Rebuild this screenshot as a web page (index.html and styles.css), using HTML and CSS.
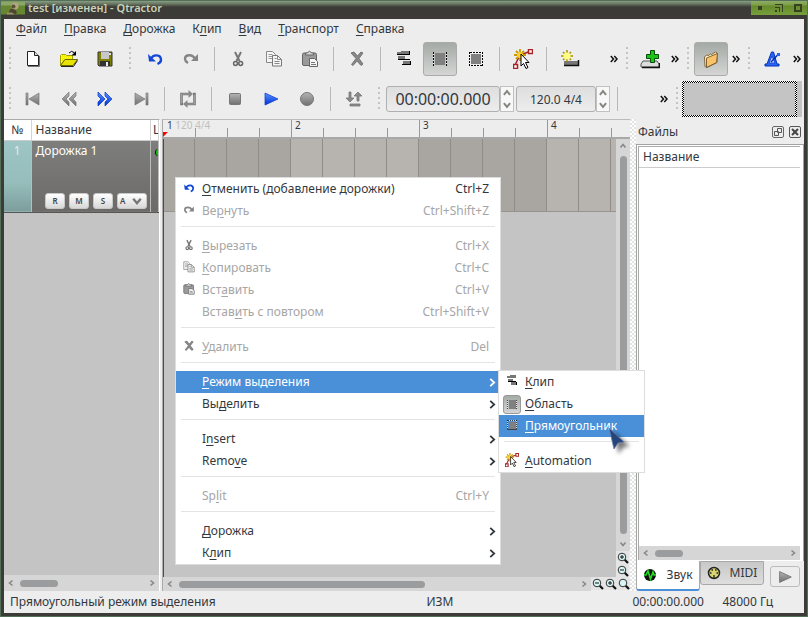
FILE: index.html
```html
<!DOCTYPE html>
<html lang="ru">
<head>
<meta charset="utf-8">
<title>test [изменен] - Qtractor</title>
<link rel="stylesheet" href="styles.css">
</head>
<body>
<svg class="defs" aria-hidden="true">
<defs>
<linearGradient id="g-gray" x1="0" y1="0" x2="0" y2="1"><stop offset="0" stop-color="#b4b4b4"/><stop offset="1" stop-color="#707070"/></linearGradient>
<linearGradient id="g-blue" x1="0" y1="0" x2="0" y2="1"><stop offset="0" stop-color="#5c94ff"/><stop offset="1" stop-color="#0030d8"/></linearGradient>
<pattern id="p-yellow" width="2" height="2" patternUnits="userSpaceOnUse"><rect width="2" height="2" fill="#f4f000"/><rect width="1" height="1" fill="#fffcc0"/></pattern>
</defs>
<symbol id="i-new" viewBox="0 0 20 20"><path d="M5 17.500h11.500V7" fill="none" stroke="#777"/><path d="M4.500 2.500h7l4 4v10h-11z" fill="#fff" stroke="#222"/><path d="M11.500 2.500v4h4" fill="#ddd" stroke="#222"/></symbol>
<symbol id="i-open" viewBox="0 0 20 20"><path d="M1.500 16.500v-10l1-1h4l1 1h6v4H6z" fill="url(#p-yellow)" stroke="#a0a000"/><path d="M1.500 16.500l4.500-6h12.500l-4.500 6z" fill="#e8e400" stroke="#6c6c00"/><path d="M2 17.500h12.500l4-6" fill="none" stroke="#222"/><path d="M10 4q2.500-3 5-.5l1 1.500" fill="none" stroke="#000"/><path d="M17 2v4.500h-4.500z"/></symbol>
<symbol id="i-save" viewBox="0 0 20 20"><path d="M3 3h14v14H4l-1-1z" fill="#808000" stroke="#333"/><path d="M6 3h8v7H6z" fill="#c8c8c8"/><path d="M5 12h10v5H5z" fill="#333"/><path d="M11 13h2v4h-2z" fill="#eee"/><path d="M14 4h2v2h-2z" fill="#ddd"/></symbol>
<symbol id="i-undo" viewBox="0 0 20 20"><path d="M6 10c2-5 10-5 10 1q0 2.500-3.500 4" fill="none" stroke="currentColor" stroke-width="2.400"/><path d="M3 5l1 7.500h7z" fill="currentColor"/></symbol>
<symbol id="i-redo" viewBox="0 0 20 20"><path d="M14 10c-2-5-10-5-10 0q0 2 3 4" fill="none" stroke="currentColor" stroke-width="2.400"/><path d="M17 5v7h-7z" fill="currentColor"/></symbol>
<symbol id="i-cut" viewBox="0 0 20 20"><path d="M7 3l4.500 9M13 3l-4.500 9" fill="none" stroke="#777" stroke-width="2"/><circle cx="7.500" cy="14.500" r="1.900" fill="none" stroke="#666" stroke-width="1.500"/><circle cx="12.700" cy="14.500" r="1.900" fill="none" stroke="#666" stroke-width="1.500"/></symbol>
<symbol id="i-copy" viewBox="0 0 20 20"><path d="M2.500 2.500h6l3 3v8h-9z" fill="#f5f5f5" stroke="#888"/><path d="M4.500 5.500h4M4.500 7.500h4M4.500 9.500h4" stroke="#999"/><path d="M8.500 6.500h5l4 4v6.500h-9z" fill="#f5f5f5" stroke="#777"/><path d="M13.500 6.500v4h4M10.500 9.500h2M10.500 12.500h5M10.500 14.500h5" fill="none" stroke="#888"/></symbol>
<symbol id="i-paste" viewBox="0 0 20 20"><rect x="2.500" y="4" width="14" height="12.500" rx="1.500" fill="#9a9a9a" stroke="#666"/><path d="M5.500 6V4h2q2-3.500 4 0h2v2z" fill="#d8d8d8" stroke="#666"/><path d="M9.500 9.500h5l3 3v5h-8z" fill="#f5f5f5" stroke="#666"/><path d="M11 13.500h4M11 15.500h5" stroke="#777"/></symbol>
<symbol id="i-delete" viewBox="0 0 20 20"><path d="M4 4l3-1 3.500 4L14 3l2 1-4 5.500 4 5.500-2 1.500-4-4.500-4 4.500-1.500-1L9 9.500z" fill="#888" stroke="#666" stroke-width=".8"/></symbol>
<symbol id="i-clip" viewBox="0 0 20 20"><g shape-rendering="crispEdges"><path d="M7 2h9v3H7zM4 7h7v3H4zM9 12h7v3H9z" fill="#777"/><path d="M3 3h4v2H3z" fill="#777"/><path d="M3 5h13v1H3zM15 2h1v4h-1zM4 10h12v1H4zM8 15h9v1H8zM16 12h1v4h-1z" fill="#000"/></g></symbol>
<symbol id="i-range" viewBox="0 0 20 20"><g shape-rendering="crispEdges"><path d="M5 4h10v12H5z" fill="#808080"/><path d="M3.500 3v14M16.500 3v14" stroke="#fff"/><path d="M3.500 3v14M16.500 3v14" stroke="#000" stroke-dasharray="2 1"/></g></symbol>
<symbol id="i-rect" viewBox="0 0 20 20"><g shape-rendering="crispEdges"><path d="M5 5h10v10H5z" fill="#808080"/><path d="M3.500 3.500h13v13h-13z" fill="none" stroke="#fff"/><path d="M3.500 3.500h13v13h-13z" fill="none" stroke="#000" stroke-dasharray="2 1"/></g></symbol>
<symbol id="i-auto" viewBox="0 0 20 20"><path d="M2 16L7 6l11-4" fill="none" stroke="#a22" stroke-width="1.500"/><path d="M7 0v12M1 6h12M3 2l8 8M11 2l-8 8" stroke="#c99a00" stroke-width="1.800"/><circle cx="7" cy="6" r="3" fill="#ffd030"/><path d="M.5 15.500h4v4h-4zM15.500.5h4v4h-4z" fill="#fff" stroke="#a22" stroke-width="1.500"/><path d="M8 5l8 8.500h-3.500l2.500 5-2 1-2.500-5-2.500 2.500z" fill="#fff" stroke="#000"/></symbol>
<symbol id="i-addclip" viewBox="0 0 20 20"><path d="M4 12h14v4H4z" fill="#777"/><path d="M4 16.500h14.500V11" fill="none" stroke="#111" stroke-width="1.500"/><path d="M7 1v12M1 7h12M3 3l8 8M11 3l-8 8" stroke="#a89000" stroke-width="1.500"/><circle cx="7" cy="7" r="3.600" fill="#ffff80"/></symbol>
<symbol id="i-addtrack" viewBox="0 0 20 20"><path d="M3 12h14l2 3v3H1v-3z" fill="#ddd" stroke="#555"/><path d="M2 18.500h17.500V14" stroke="#111" stroke-width="1.500" fill="none"/><path d="M10.500 1.500h4v4h4v4h-4v4h-4v-4h-4v-4h4z" fill="#19c519" stroke="#064d06"/></symbol>
<symbol id="i-folder" viewBox="0 0 20 20"><path d="M3.500 8l2-2 2 .5 2-1.500 1 .5 4-2.500 1.500 1v9.500l-10 5-2-1z" fill="#fff0c8" stroke="#7d6238"/><path d="M5.500 9l11-4.500-1 9-10 5z" fill="#fbc368" stroke="#7d6238"/></symbol>
<symbol id="i-metro" viewBox="0 0 20 20"><path d="M9.500 3h2l3.500 12h2v2H3v-2h2z" fill="#2a66f4" stroke="#0030b8"/><path d="M10 7l-3 7h6z" fill="#d8e4ff" stroke="#1a4ad8"/><path d="M9 13l7.500-8" stroke="#0030b8" stroke-width="1.500"/><path d="M15 4h3v3h-3z" fill="#2a66f4"/></symbol>
<symbol id="i-start" viewBox="0 0 20 20"><path d="M3 4h2v12H3zM16 4v12L6 10z" fill="url(#g-gray)" stroke="#777" stroke-width=".7"/></symbol>
<symbol id="i-rew" viewBox="0 0 20 20"><path d="M10 3v4l-3 3 3 3v4l-7-7zM17 3v4l-3 3 3 3v4l-7-7z" fill="url(#g-gray)" stroke="#777" stroke-width=".7"/></symbol>
<symbol id="i-fwd" viewBox="0 0 20 20"><path d="M3 3v4l3 3-3 3v4l7-7zM10 3v4l3 3-3 3v4l7-7z" fill="url(#g-blue)" stroke="#0038c8" stroke-width=".7"/></symbol>
<symbol id="i-end" viewBox="0 0 20 20"><path d="M15 4h2v12h-2zM4 4v12l10-6z" fill="url(#g-gray)" stroke="#777" stroke-width=".7"/></symbol>
<symbol id="i-loop" viewBox="0 0 20 20"><path d="M11 5H3.500v10H5M15 5h1.500v10H9" fill="none" stroke="#777" stroke-width="2.600"/><path d="M11 5H3.500v9.500M16.500 5.500V15H9" fill="none" stroke="#aaa" stroke-width=".8"/><path d="M10.500 1l4.500 4-4.500 4zM9.500 11v8L5 15z" fill="#8a8a8a"/></symbol>
<symbol id="i-stop" viewBox="0 0 20 20"><rect x="4.500" y="4.500" width="11" height="11" rx="1" fill="url(#g-gray)" stroke="#777"/></symbol>
<symbol id="i-play" viewBox="0 0 20 20"><path d="M4 4v12l13-6z" fill="url(#g-blue)" stroke="#0038c8" stroke-width=".7"/></symbol>
<symbol id="i-rec" viewBox="0 0 20 20"><circle cx="10" cy="10" r="6.500" fill="url(#g-gray)" stroke="#777"/></symbol>
<symbol id="i-punch" viewBox="0 0 20 20"><path d="M5 3h2v6h3l-4 4-4-4h3zM13 12h2V7h3l-4-4-4 4h3zM6 15h10v2H6z" fill="#8a8a8a" stroke="#777" stroke-width=".8"/></symbol>
<symbol id="i-more" viewBox="0 0 8 8"><path d="M.8 1l2.700 3L.8 7M4.300 1L7 4 4.300 7" fill="none" stroke="#111" stroke-width="1.500"/></symbol>
<symbol id="i-left" viewBox="0 0 8 8"><path d="M5.500 1.500L2.500 4l3 2.500" fill="none" stroke="currentColor" stroke-width="1.600"/></symbol>
<symbol id="i-right" viewBox="0 0 8 8"><path d="M2.500 1.500L5.500 4l-3 2.500" fill="none" stroke="currentColor" stroke-width="1.600"/></symbol>
<symbol id="i-up" viewBox="0 0 8 8"><path d="M1.500 5.500L4 2.500l2.500 3" fill="none" stroke="currentColor" stroke-width="1.600"/></symbol>
<symbol id="i-down" viewBox="0 0 8 8"><path d="M1.500 2.500L4 5.500l2.500-3" fill="none" stroke="currentColor" stroke-width="1.600"/></symbol>
<symbol id="i-sub" viewBox="0 0 8 8"><path d="M2 .8L5.500 4 2 7.200" fill="none" stroke="currentColor" stroke-width="1.600"/></symbol>
<symbol id="i-zoom" viewBox="0 0 12 12"><path d="M7.500 7.500l3.500 3.500" stroke="#111" stroke-width="2.200"/><circle cx="5" cy="5" r="3.800" fill="#d8f4f4" stroke="#333"/></symbol>
<symbol id="i-zoomin" viewBox="0 0 12 12"><use href="#i-zoom"/><path d="M3 5h4M5 3v4" stroke="#111"/></symbol>
<symbol id="i-zoomout" viewBox="0 0 12 12"><use href="#i-zoom"/><path d="M3 5h4" stroke="#111"/></symbol>
</svg>

<div class="window">
  <header class="titlebar">
    <svg class="app-icon" viewBox="0 0 24 13"><path d="M0 0h24v13H0z" fill="#66872f"/><path d="M0 0h24v4H0z" fill="#8aa668"/><path d="M9 8l4-2 3 5-2 2H7z" fill="#4b4630"/><circle cx="14" cy="4.500" r="3.500" fill="#b3a680"/><circle cx="12.500" cy="5" r="2" fill="#5b5138"/><path d="M6 11h5l3 2H6z" fill="#9a8d70"/></svg>
    <h1>test [изменен] - Qtractor</h1>
    <div class="win-buttons">
      <button aria-label="Свернуть"><svg viewBox="0 0 8 8"><path d="M2 2h4v4H2z"/></svg></button>
      <button aria-label="Развернуть"><svg viewBox="0 0 8 8"><path d="M0 0h8v8H7V1H0zM0 3h5v5H4V4H0zM0 6h2v2H0z"/></svg></button>
      <button aria-label="Закрыть"><svg viewBox="0 0 8 8"><path d="M1 1h6v6H1z" fill="none" stroke="#37401f" stroke-width="2"/></svg></button>
    </div>
  </header>

  <div class="content">
    <nav class="menubar">
      <button><u>Ф</u>айл</button><button><u>П</u>равка</button><button><u>Д</u>орожка</button><button>К<u>л</u>ип</button><button><u>В</u>ид</button><button><u>Т</u>ранспорт</button><button><u>С</u>правка</button>
    </nav>

    <div class="toolrow">
      <div class="toolbar">
        <i class="grip"></i>
        <button class="tool" aria-label="Создать"><svg><use href="#i-new"/></svg></button>
        <button class="tool" aria-label="Открыть"><svg><use href="#i-open"/></svg></button>
        <button class="tool" aria-label="Сохранить"><svg><use href="#i-save"/></svg></button>
      </div>
      <div class="toolbar grow">
        <i class="grip wide"></i>
        <button class="tool blue" aria-label="Отменить"><svg><use href="#i-undo"/></svg></button>
        <button class="tool gray" aria-label="Вернуть"><svg><use href="#i-redo"/></svg></button>
        <i class="sep"></i>
        <button class="tool" aria-label="Вырезать"><svg><use href="#i-cut"/></svg></button>
        <button class="tool" aria-label="Копировать"><svg><use href="#i-copy"/></svg></button>
        <button class="tool" aria-label="Вставить"><svg><use href="#i-paste"/></svg></button>
        <i class="sep"></i>
        <button class="tool" aria-label="Удалить"><svg><use href="#i-delete"/></svg></button>
        <i class="sep"></i>
        <button class="tool" aria-label="Выделение клипа"><svg><use href="#i-clip"/></svg></button>
        <button class="tool on" aria-label="Выделение области"><svg><use href="#i-range"/></svg></button>
        <button class="tool" aria-label="Выделение прямоугольника"><svg><use href="#i-rect"/></svg></button>
        <i class="sep"></i>
        <button class="tool" aria-label="Автоматизация"><svg><use href="#i-auto"/></svg></button>
        <i class="sep"></i>
        <button class="tool" aria-label="Новый клип"><svg><use href="#i-addclip"/></svg></button>
        <button class="more end" aria-label="Ещё"><svg><use href="#i-more"/></svg></button>
      </div>
      <div class="toolbar">
        <i class="grip"></i>
        <button class="tool" aria-label="Добавить дорожку"><svg><use href="#i-addtrack"/></svg></button>
        <button class="more" aria-label="Ещё"><svg><use href="#i-more"/></svg></button>
      </div>
      <div class="toolbar">
        <i class="grip"></i>
        <button class="tool on" aria-label="Файлы"><svg><use href="#i-folder"/></svg></button>
        <button class="more" aria-label="Ещё"><svg><use href="#i-more"/></svg></button>
      </div>
      <div class="toolbar">
        <i class="grip"></i>
        <button class="tool" aria-label="Метроном"><svg><use href="#i-metro"/></svg></button>
        <button class="more" aria-label="Ещё"><svg><use href="#i-more"/></svg></button>
      </div>
    </div>

    <div class="toolrow">
      <div class="toolbar">
        <i class="grip"></i>
        <button class="tool" aria-label="В начало"><svg><use href="#i-start"/></svg></button>
        <button class="tool" aria-label="Назад"><svg><use href="#i-rew"/></svg></button>
        <button class="tool" aria-label="Вперёд"><svg><use href="#i-fwd"/></svg></button>
        <button class="tool" aria-label="В конец"><svg><use href="#i-end"/></svg></button>
        <i class="sep"></i>
        <button class="tool" aria-label="Цикл"><svg><use href="#i-loop"/></svg></button>
        <i class="sep"></i>
        <button class="tool" aria-label="Стоп"><svg><use href="#i-stop"/></svg></button>
        <button class="tool" aria-label="Воспроизвести"><svg><use href="#i-play"/></svg></button>
        <button class="tool" aria-label="Запись"><svg><use href="#i-rec"/></svg></button>
        <i class="sep"></i>
        <button class="tool" aria-label="Врезка"><svg><use href="#i-punch"/></svg></button>
      </div>
      <div class="toolbar grow">
        <i class="grip wide"></i>
        <div class="spin">
          <input class="time" type="text" value="00:00:00.000" aria-label="Время">
          <span class="steps"><button aria-label="Больше"><svg><use href="#i-up"/></svg></button><button aria-label="Меньше"><svg><use href="#i-down"/></svg></button></span>
        </div>
        <div class="spin">
          <input class="tempo" type="text" value="120.0 4/4" aria-label="Темп">
          <span class="steps"><button aria-label="Больше"><svg><use href="#i-up"/></svg></button><button aria-label="Меньше"><svg><use href="#i-down"/></svg></button></span>
        </div>
        <i class="sep"></i>
        <button class="more end" aria-label="Ещё"><svg><use href="#i-more"/></svg></button>
      </div>
      <div class="toolbar">
        <i class="grip"></i>
        <div class="thumbview"><div></div></div>
      </div>
    </div>

    <main class="workspace">
      <section class="tracklist">
        <table class="tracks">
          <thead><tr><th class="num">№</th><th class="name">Название</th><th class="bus"><span>L</span></th></tr></thead>
          <tbody><tr>
            <td class="num">1</td>
            <td class="name">
              <div class="track">Дорожка 1
                <div class="track-buttons"><button>R</button><button>M</button><button>S</button><button class="auto">A <svg><use href="#i-down"/></svg></button></div>
              </div>
            </td>
            <td class="bus"><span class="led"></span></td>
          </tr></tbody>
        </table>
        <div class="empty"></div>
        <div class="hscroll"><button aria-label="Влево"><svg><use href="#i-left"/></svg></button><div class="rail"><i class="thumb third"></i></div><button aria-label="Вправо"><svg><use href="#i-right"/></svg></button></div>
      </section>

      <section class="timeline">
        <div class="ruler">
          <div class="bar first">1 <span>120 4/4</span></div><div class="bar">2</div><div class="bar">3</div><div class="bar">4</div>
        </div>
        <div class="canvas"><div class="lane"></div></div>
        <div class="vside">
          <div class="vscroll"><button aria-label="Вверх"><svg><use href="#i-up"/></svg></button><i class="thumb"></i><button aria-label="Вниз"><svg><use href="#i-down"/></svg></button></div>
          <button class="zoom" aria-label="Крупнее по вертикали"><svg><use href="#i-zoomin"/></svg></button>
          <button class="zoom" aria-label="Мельче по вертикали"><svg><use href="#i-zoomout"/></svg></button>
        </div>
        <div class="hside">
          <div class="hscroll"><button aria-label="Влево"><svg><use href="#i-left"/></svg></button><div class="rail"><i class="thumb wide"></i></div><button aria-label="Вправо"><svg><use href="#i-right"/></svg></button></div>
          <button class="zoom" aria-label="Мельче"><svg><use href="#i-zoomout"/></svg></button>
          <button class="zoom" aria-label="Крупнее"><svg><use href="#i-zoomin"/></svg></button>
          <button class="zoom" aria-label="Сбросить масштаб"><svg><use href="#i-zoom"/></svg></button>
        </div>
      </section>

      <div class="splitter"></div>

      <aside class="files">
        <div class="dock-title"><h2>Файлы</h2>
          <button aria-label="Открепить"><svg viewBox="0 0 12 12"><rect x=".5" y=".5" width="11" height="11" rx="1.500" fill="none" stroke="#666"/><path d="M5.500 2.500h4v4h-4zM2.500 5.500h4v4h-4z" fill="#ededed" stroke="#555"/></svg></button>
          <button aria-label="Закрыть панель"><svg viewBox="0 0 12 12"><rect x=".5" y=".5" width="11" height="11" rx="1.500" fill="none" stroke="#555"/><path d="M3 3l6 6M9 3l-6 6" stroke="#444" stroke-width="2"/></svg></button>
        </div>
        <div class="pane">
          <div class="filelist">
            <table><thead><tr><th>Название</th></tr></thead></table>
            <div class="hscroll"><button aria-label="Влево"><svg><use href="#i-left"/></svg></button><div class="rail"><i class="thumb fifth"></i></div><button aria-label="Вправо"><svg><use href="#i-right"/></svg></button></div>
          </div>
        </div>
        <div class="tabs">
          <button class="tab active"><svg viewBox="0 0 14 14"><circle cx="7" cy="7" r="6" fill="#111"/><path d="M1 7h2l2-4 2.500 8L10 4l1 3h2" fill="none" stroke="#20e020" stroke-width="1.600"/></svg>Звук</button>
          <button class="tab"><svg viewBox="0 0 14 14"><circle cx="7" cy="7" r="5.500" fill="#d8d470" stroke="#222" stroke-width="1.500"/><path d="M3 7h1.500M9.500 7H11M4.500 4h1.500M8 4h1.500M7 9v3" stroke="#222" stroke-width="1.300"/></svg>MIDI</button>
          <button class="preview" aria-label="Прослушать"><svg viewBox="0 0 20 20"><path d="M4 4v12l13-6z" fill="url(#g-gray)" stroke="#777"/></svg></button>
        </div>
      </aside>
    </main>

    <footer class="status"><span class="hint">Прямоугольный режим выделения</span><span class="modified">ИЗМ</span><span class="clock">00:00:00.000</span><span class="rate">48000 Гц</span></footer>
  </div>
</div>

<div class="menu context" role="menu">
  <button role="menuitem"><svg class="blue"><use href="#i-undo"/></svg><span><u>О</u>тменить (добавление дорожки)</span><kbd>Ctrl+Z</kbd></button>
  <button role="menuitem" disabled><svg class="gray"><use href="#i-redo"/></svg><span>Ве<u>р</u>нуть</span><kbd>Ctrl+Shift+Z</kbd></button>
  <hr>
  <button role="menuitem" disabled><svg><use href="#i-cut"/></svg><span><u>В</u>ырезать</span><kbd>Ctrl+X</kbd></button>
  <button role="menuitem" disabled><svg><use href="#i-copy"/></svg><span><u>К</u>опировать</span><kbd>Ctrl+C</kbd></button>
  <button role="menuitem" disabled><svg><use href="#i-paste"/></svg><span>Вст<u>а</u>вить</span><kbd>Ctrl+V</kbd></button>
  <button role="menuitem" disabled><svg></svg><span>Встав<u>и</u>ть с повтором</span><kbd>Ctrl+Shift+V</kbd></button>
  <hr>
  <button role="menuitem" disabled><svg><use href="#i-delete"/></svg><span><u>У</u>далить</span><kbd>Del</kbd></button>
  <hr>
  <button role="menuitem" class="hot"><svg></svg><span><u>Р</u>ежим выделения</span><svg class="arrow"><use href="#i-sub"/></svg></button>
  <button role="menuitem"><svg></svg><span>Вы<u>д</u>елить</span><svg class="arrow"><use href="#i-sub"/></svg></button>
  <hr>
  <button role="menuitem"><svg></svg><span>I<u>n</u>sert</span><svg class="arrow"><use href="#i-sub"/></svg></button>
  <button role="menuitem"><svg></svg><span>Remo<u>v</u>e</span><svg class="arrow"><use href="#i-sub"/></svg></button>
  <hr>
  <button role="menuitem" disabled><svg></svg><span>Sp<u>l</u>it</span><kbd>Ctrl+Y</kbd></button>
  <hr>
  <button role="menuitem"><svg></svg><span><u>Д</u>орожка</span><svg class="arrow"><use href="#i-sub"/></svg></button>
  <button role="menuitem"><svg></svg><span>К<u>л</u>ип</span><svg class="arrow"><use href="#i-sub"/></svg></button>
</div>

<div class="menu submenu" role="menu">
  <button role="menuitem"><svg><use href="#i-clip"/></svg><span><u>К</u>лип</span></button>
  <button role="menuitem"><svg class="checked"><use href="#i-range"/></svg><span><u>О</u>бласть</span></button>
  <button role="menuitem" class="hot"><svg><use href="#i-rect"/></svg><span><u>П</u>рямоугольник</span></button>
  <hr>
  <button role="menuitem"><svg><use href="#i-auto"/></svg><span><u>A</u>utomation</span></button>
</div>

<svg class="cursor" viewBox="0 0 28 30" aria-hidden="true"><path d="M1 1l15 14-6 1-4 6z" fill="#26457a" stroke="#6a7fa8" stroke-width=".8"/></svg>
</body>
</html>
```

FILE: styles.css
```css
* { box-sizing: border-box; }

body {
  margin: 0;
  height: 100vh;
  overflow: hidden;
  background: #3c3b37;
  color: #33383d;
  font: 12px/20px "Noto Sans", sans-serif;
}

button, input {
  margin: 0;
  padding: 0;
  border: 0;
  background: none;
  color: inherit;
  font: inherit;
}

svg { display: block; flex: none; }
h1, h2 { margin: 0; font: inherit; }
u { text-decoration: underline; text-underline-offset: 2px; }

.defs { position: absolute; width: 0; height: 0; }
.blue { color: #1048d8; }
.gray { color: #858585; }

.window {
  display: flex;
  flex-direction: column;
  height: 100%;
  border: 1px solid #557058;
  background: #3c3b37;
}

.titlebar {
  display: flex;
  flex: none;
  height: 18px;
  background: linear-gradient(#8a9d85, #66755f 3px, #3c3b37 6px);
}
.app-icon { width: 24px; height: 14px; }
.titlebar h1 {
  flex: 1;
  padding-left: 3px;
  color: #c9d3b9;
  font-weight: 600;
  font-size: 11px;
  line-height: 14px;
}
.win-buttons {
  display: flex;
  justify-content: space-around;
  width: 56px;
  height: 14px;
  background: linear-gradient(#8fac68, #7c9f45 4px, #66892d 5px, #77a03a);
}
.win-buttons svg { width: 8px; height: 8px; fill: #37401f; }

.content {
  display: flex;
  flex: 1;
  flex-direction: column;
  min-height: 0;
  margin: 0 3px 3px;
  background: #ededed;
}

.menubar {
  display: flex;
  flex: none;
  gap: 17px;
  height: 20px;
  padding-left: 12px;
}

.toolrow { display: flex; flex: none; height: 40px; }
.toolbar { display: flex; align-items: center; }
.grow { flex: 1; }
.grip {
  flex: none;
  width: 11px;
  height: 24px;
  background: repeating-linear-gradient(#c4c4c4 0 2px, transparent 2px 5px) center / 2px 100% no-repeat;
}
.grip.wide { width: 14px; }
.sep {
  flex: none;
  width: 11px;
  height: 24px;
  background: linear-gradient(#b8b8b8, #b8b8b8) center / 1px 100% no-repeat;
}
.tool {
  display: grid;
  place-items: center;
  width: 34px;
  height: 34px;
  margin: 0 1px;
}
.tool svg { width: 20px; height: 20px; }
.tool.on {
  border: 1px solid #a8aba8;
  border-radius: 3px;
  background: linear-gradient(#a4aaa6, #d4d5d4);
}
.more { display: grid; place-items: center; width: 14px; height: 34px; }
.more svg { width: 8px; height: 8px; }
.more.end { margin-left: auto; }

.spin { display: flex; margin-right: 2px; }
.spin input {
  height: 26px;
  border: 1px solid #b0b0b0;
  border-radius: 3px;
  background: linear-gradient(#dedede, #ededed);
  text-align: center;
}
.spin .time { width: 114px; font-size: 16px; }
.spin .tempo { width: 80px; }
.steps {
  display: flex;
  flex-direction: column;
  width: 14px;
  border: 1px solid #c0c0c0;
  background: #f8f8f8;
}
.steps button { display: grid; flex: 1; place-items: center; color: #858780; }
.steps svg { width: 10px; height: 10px; }

.thumbview {
  width: 120px;
  height: 36px;
  margin-right: 2px;
  padding-right: 5px;
  background: #c4c4c4;
}
.thumbview div {
  height: 100%;
  padding: 2px;
  background:
    linear-gradient(#c4c4c4, #c4c4c4) content-box no-repeat,
    repeating-conic-gradient(#000 0 25%, #fff 0 50%) 0 0 / 2px 2px;
}

.workspace { display: flex; flex: 1; min-height: 0; }

.tracklist {
  display: flex;
  flex: none;
  flex-direction: column;
  width: 156px;
  border-top: 1px solid #aaa;
  border-right: 1px solid #fff;
}
.tracks { width: 100%; border-collapse: collapse; table-layout: fixed; }
.tracks th {
  height: 20px;
  padding: 0 4px;
  border-right: 1px solid #d4d4d4;
  border-bottom: 1px solid #ccc;
  background: #fff;
  font-weight: 400;
  line-height: 18px;
  text-align: left;
}
.tracks .num { width: 27px; padding: 0; text-align: center; }
.tracks .bus { width: 8px; padding: 0 0 0 2px; overflow: hidden; }
.tracks td {
  height: 72px;
  padding: 0;
  border-right: 1px solid #bbb;
  border-bottom: 1px solid #555;
  background: linear-gradient(#7e7e7c, #6b6a69);
  color: #fff;
  vertical-align: top;
}
.tracks td.num { background: linear-gradient(#9cc5c3, #96bdbb 60%, #7c9d9c); color: #dff0ef; }
.track {
  display: flex;
  flex-direction: column;
  justify-content: space-between;
  height: 71px;
  padding: 0 4px 3px;
}
.track-buttons { display: flex; justify-content: flex-end; gap: 4px; margin-right: -1px; }
.track-buttons button {
  width: 20px;
  height: 16px;
  border: 1px solid #c8c8c8;
  border-radius: 3px;
  background: linear-gradient(#fff, #d8d8d8);
  color: #444;
  font-weight: 600;
  font-size: 8px;
  line-height: 14px;
}
.track-buttons .auto {
  display: flex;
  align-items: center;
  justify-content: space-between;
  width: 30px;
  padding: 0 3px 0 2px;
}
.auto svg { width: 12px; height: 12px; color: #777; }
.led { display: block; width: 5px; height: 7px; margin: 8px 0 0 2px; border-left: 1px solid #111; border-radius: 4px 0 0 4px; background: #10c010; }
.empty { flex: 1; background: #c4c4c4; }

.hscroll { display: flex; flex: 1; align-items: center; height: 14px; background: #d6d6d6; color: #888; }
.tracklist .hscroll { flex: none; height: 16px; }
.hscroll button, .vscroll button { display: grid; place-items: center; width: 14px; height: 14px; }
.hscroll svg, .vscroll svg { width: 8px; height: 8px; }
.rail { display: flex; flex: 1; padding: 0 2px; }
.thumb { display: block; height: 7px; border-radius: 4px; background: #9a9c9d; }
.thumb.third { width: 31%; }
.thumb.wide { width: 62%; }
.thumb.fifth { width: 22%; }

.timeline {
  display: grid;
  flex: 1;
  grid-template: 20px 1fr 14px / 1fr 14px;
  min-width: 0;
  margin-left: 2px;
  border-left: 1px solid #aaa;
}
.ruler {
  display: flex;
  grid-column: 1 / 3;
  overflow: hidden;
  border-top: 1px solid #bbb;
  border-bottom: 2px solid #a8a8a8;
  background: #ededed;
}
.bar {
  flex: none;
  width: 128px;
  padding-left: 3px;
  border-left: 1px solid #999;
  background: repeating-linear-gradient(90deg, transparent 0 31px, #999 31px 32px) 0 100% / 100% 9px no-repeat;
  font-size: 10px;
  line-height: 11px;
}
.bar span { color: #c0c0c0; }
.bar.first {
  border-left-color: transparent;
  background:
    linear-gradient(135deg, #f00 0 3px, transparent 4px) 0 100% / 5px 5px no-repeat border-box,
    repeating-linear-gradient(90deg, transparent 0 31px, #999 31px 32px) 0 100% / 100% 9px no-repeat;
}
.canvas { border-left: 1px solid #f00; background: #c4c4c4; }
.lane {
  height: 73px;
  border-bottom: 1px solid #98938e;
  background:
    repeating-linear-gradient(90deg, transparent 0 30px, #918c87 30px 31px, transparent 31px 32px),
    repeating-linear-gradient(90deg, #a9a5a1 0 127px, #b7b3af 127px 255px, #a9a5a1 255px 256px);
}
.vside { display: flex; flex-direction: column; }
.vscroll { display: flex; flex: 1; flex-direction: column; align-items: center; background: #d6d6d6; color: #888; }
.vscroll .thumb { flex: 1; width: 7px; height: auto; margin: 3px 0; }
.hside { display: flex; grid-column: 1 / 3; }
.zoom { display: grid; place-items: center; width: 13px; height: 13px; background: #e4e4e4; }
.zoom svg { width: 12px; height: 12px; }

.splitter {
  flex: none;
  width: 6px;
  background: repeating-conic-gradient(#fff 0 25%, #e4e4e4 0 50%) 0 0 / 4px 4px;
}

.files { display: flex; flex: none; flex-direction: column; width: 168px; }
.dock-title { display: flex; align-items: center; gap: 5px; height: 25px; padding: 0 3px 0 2px; }
.dock-title h2 { flex: 1; }
.dock-title svg { width: 12px; height: 12px; }
.pane {
  display: flex;
  flex: 1;
  padding: 1px 3px 1px 1px;
  border: 1px solid #a0a3a0;
  border-bottom: 0;
  background: #fff;
}
.filelist {
  display: flex;
  flex: 1;
  flex-direction: column;
  justify-content: space-between;
  border: 1px solid #aaa;
  border-width: 1px 0 0 1px;
}
.filelist table { width: 100%; border-collapse: collapse; }
.filelist th {
  height: 20px;
  padding: 0 4px;
  border-bottom: 1px solid #ccc;
  font-weight: 400;
  line-height: 18px;
  text-align: left;
}
.filelist .hscroll { flex: none; }
.tabs { display: flex; height: 30px; align-items: flex-start; }
.tab {
  display: flex;
  align-items: center;
  justify-content: center;
  gap: 9px;
  width: 64px;
  height: 24px;
  border: 1px solid #a8a8a8;
  border-radius: 0 0 3px 3px;
  background: linear-gradient(#c8c8c8, #dedede);
}
.tab svg { width: 14px; height: 14px; }
.tab.active { height: 30px; border: 1px solid #aaa; border-top: 0; border-bottom: 2px solid #4a90d9; background: #fff; }
.preview {
  display: grid;
  place-items: center;
  width: 30px;
  height: 21px;
  margin: 5px 0 0 6px;
  border: 1px solid #bcbcbc;
  border-radius: 3px;
}
.preview svg { width: 18px; height: 18px; }

.status { display: flex; flex: none; height: 22px; padding: 0 31px 0 6px; line-height: 22px; }
.hint { flex: 1; }
.modified { width: 206px; }
.clock { width: 90px; }

.menu {
  position: absolute;
  background: #fff;
  box-shadow: 0 0 0 1px #ddd;
}
.context { left: 176px; top: 178px; width: 324px; }
.submenu { left: 499px; top: 371px; width: 145px; }
.menu button {
  display: flex;
  align-items: center;
  gap: 6px;
  width: 100%;
  height: 22px;
  padding: 0 11px 0 6px;
  text-align: left;
}
.menu svg { width: 14px; height: 14px; margin-bottom: 2px; }
.menu span { flex: 1; }
.menu kbd { font: inherit; }
.menu button:disabled { color: #a6a6a6; }
.menu .hot { background: #4a90d9; color: #fff; }
.menu .arrow { width: 9px; height: 9px; margin: 0 -8px 0 0; }
.menu hr { height: 1px; margin: 4px 5px 8px; border: 0; background: #e4e4e4; }
.menu .checked {
  width: 18px;
  height: 19px;
  margin: 0 -2px;
  padding: 1px;
  border: 1px solid #999;
  border-radius: 3px;
  background: linear-gradient(#a4aaa6, #d4d5d4);
}

.cursor {
  position: absolute;
  left: 608px;
  top: 427px;
  width: 28px;
  height: 30px;
  filter: drop-shadow(5px 4px 2px #0008);
}
```
